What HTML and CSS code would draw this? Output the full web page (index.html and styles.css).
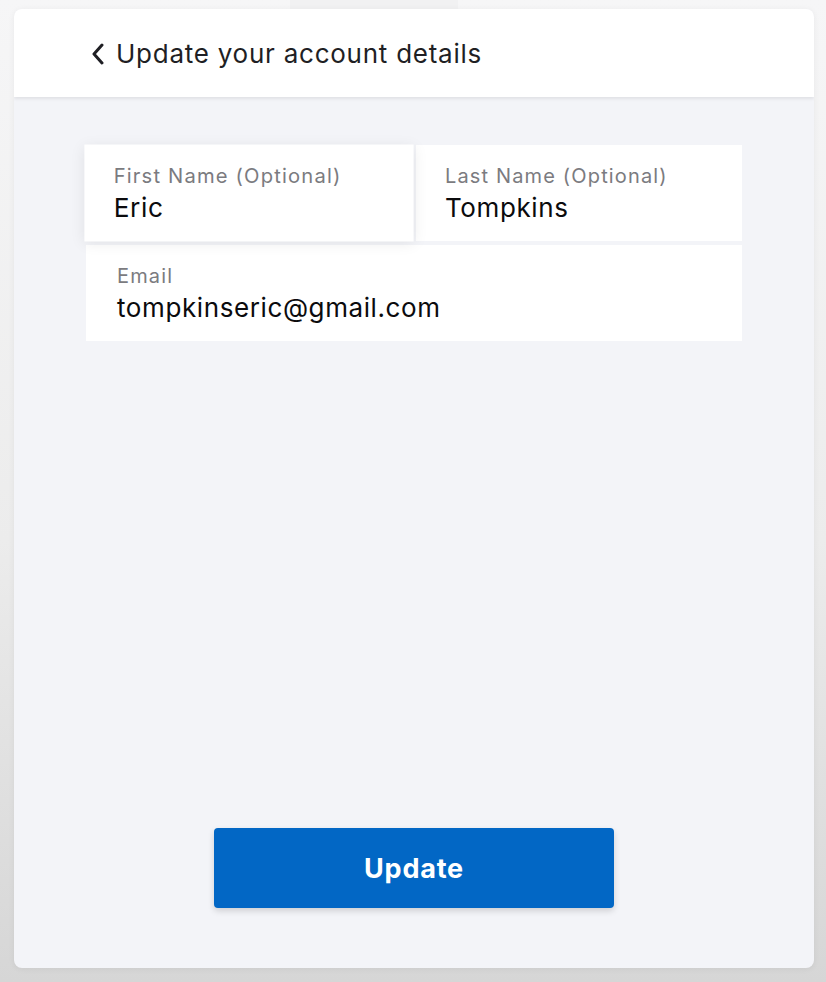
FILE: index.html
```html
<!DOCTYPE html>
<html lang="en">
  <head>
    <meta charset="UTF-8" />
    <meta name="viewport" content="width=device-width, initial-scale=1.0" />
    <title>Update your account details</title>
    <link rel="stylesheet" href="styles.css">
  </head>
  <body>
    <div class="backdrop-shape"></div>
    <div class="card">
      <div class="card-header">
        <a class="back" href="#">
          <svg width="14" height="22" viewBox="0 0 14 22">
            <path d="M11 2 L3 11 L11 20" fill="none" stroke="#1f1f24" stroke-width="3" stroke-linecap="round" stroke-linejoin="round" />
          </svg>
        </a>
        <h1>Update your account details</h1>
      </div>

      <div class="form">
        <div class="row">
          <div class="field focused">
            <label>First Name (Optional)</label>
            <div class="value">Eric</div>
          </div>
          <div class="field">
            <label>Last Name (Optional)</label>
            <div class="value">Tompkins</div>
          </div>
        </div>
        <div class="row">
          <div class="field wide">
            <label>Email</label>
            <div class="value">tompkinseric@gmail.com</div>
          </div>
        </div>
      </div>

      <div class="actions">
        <button class="btn-primary">Update</button>
      </div>
    </div>
  </body>
</html>
```

FILE: styles.css
```css
html,
body {
  height: 100%;
}
body {
  font-family: Inter, "Noto Sans", Arial, sans-serif;
  background: linear-gradient(to bottom, #f6f6f7 0%, #ececec 55%, #d6d6d6 100%);
  margin: 0;
  overflow: hidden;
  position: relative;
}
.backdrop-shape {
  position: absolute;
  top: 0;
  left: 290px;
  width: 168px;
  height: 40px;
  background: #f1f1f2;
}
.card {
  position: relative;
  width: 800px;
  height: 959px;
  margin: 9px 0 0 14px;
  display: flex;
  flex-direction: column;
  background: #f3f4f8;
  border-radius: 8px;
  box-shadow: 0 1px 6px rgba(0, 0, 0, 0.06);
  overflow: hidden;
}
.card-header {
  height: 88px;
  flex-shrink: 0;
  background: white;
  display: flex;
  align-items: center;
  padding-left: 77px;
  box-shadow: 0 2px 3px rgba(0, 0, 0, 0.08);
  position: relative;
  z-index: 1;
}
.back {
  display: flex;
  align-items: center;
  margin-right: 11px;
  margin-top: 1px;
}
.card-header h1 {
  margin: 0;
  font-size: 26px;
  font-weight: 400;
  color: #1f1f24;
  letter-spacing: 0.75px;
}
.form {
  flex: 1;
  padding: 48px 72px 0 72px;
  display: flex;
  flex-direction: column;
  gap: 4px;
}
.row {
  display: flex;
  gap: 4px;
}
.field {
  flex: 1;
  height: 96px;
  box-sizing: border-box;
  background: white;
  padding: 19px 30px 0 29px;
  display: flex;
  flex-direction: column;
}
.field.wide {
  padding-left: 31px;
}
.field.focused {
  transform: scale(1.01);
  box-shadow: 0 2px 14px rgba(0, 0, 0, 0.08);
  position: relative;
  z-index: 1;
}
.field label {
  font-size: 20px;
  line-height: 24px;
  color: #7b7b80;
  letter-spacing: 1.15px;
}
.field .value {
  font-size: 26px;
  line-height: 34px;
  margin-top: 3px;
  color: #0b0b0d;
  letter-spacing: 0.6px;
}
.actions {
  display: flex;
  justify-content: center;
  padding-bottom: 60px;
}
.btn-primary {
  width: 400px;
  height: 80px;
  border: none;
  border-radius: 4px;
  background: #0267c5;
  color: white;
  font-family: Inter, "Noto Sans", Arial, sans-serif;
  font-size: 27px;
  font-weight: 700;
  letter-spacing: 0.8px;
  box-shadow: 0 3px 6px rgba(0, 0, 0, 0.15);
  cursor: pointer;
}
```
